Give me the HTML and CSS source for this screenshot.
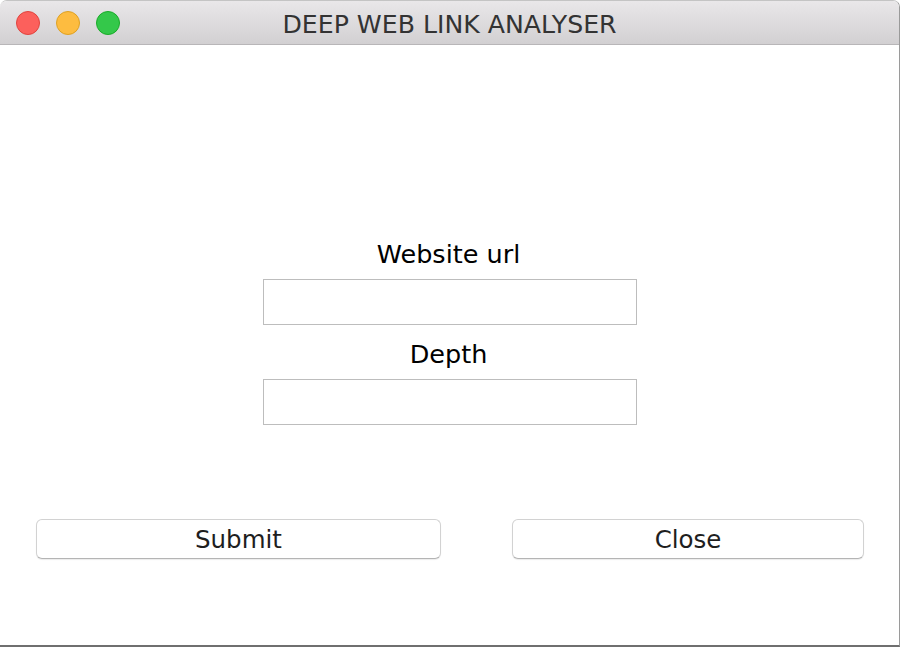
FILE: index.html
```html
<!DOCTYPE html>
<html lang="en">
<head>
<meta charset="utf-8">
<title>DEEP WEB LINK ANALYSER</title>
<link rel="stylesheet" href="styles.css">
</head>
<body>
<div class="window">
  <header class="titlebar">
    <div class="lights">
      <span class="light red"></span>
      <span class="light yellow"></span>
      <span class="light green"></span>
    </div>
    <div class="title">DEEP WEB LINK ANALYSER</div>
  </header>
  <main class="content">
    <form class="form">
      <label class="label" for="url">Website url</label>
      <input class="field" id="url" type="text">
      <label class="label label-second" for="depth">Depth</label>
      <input class="field" id="depth" type="text">
    </form>
    <div class="actions">
      <button class="btn btn-submit" type="button">Submit</button>
      <button class="btn btn-close" type="button">Close</button>
    </div>
  </main>
</div>
</body>
</html>
```
FILE: styles.css
```css
html, body {
  margin: 0;
  padding: 0;
  background: #ffffff;
}
body {
  width: 902px;
  height: 648px;
  overflow: hidden;
  font-family: "DejaVu Sans", "Noto Sans", sans-serif;
}
.window {
  box-sizing: border-box;
  width: 900px;
  height: 647px;
  background: #ffffff;
  border-top: 1px solid #c4c4c4;
  border-right: 1px solid #9a9a9a;
  border-bottom: 2px solid #6f6f6f;
  border-radius: 7px 7px 0 0;
  display: flex;
  flex-direction: column;
  overflow: hidden;
}
.titlebar {
  box-sizing: border-box;
  height: 44px;
  flex: none;
  display: flex;
  align-items: center;
  background: linear-gradient(#e9e7e9, #d2d0d2);
  border-bottom: 1px solid #b8b6b8;
  position: relative;
}
.lights {
  display: flex;
  gap: 16px;
  padding-left: 16px;
  position: relative;
  z-index: 1;
}
.light {
  box-sizing: border-box;
  width: 24px;
  height: 24px;
  border-radius: 50%;
  margin-top: 1px;
}
.red { background: #fc605c; border: 1px solid #e0443e; }
.yellow { background: #fdbc40; border: 1px solid #dea123; }
.green { background: #34c84a; border: 1px solid #1aab29; }
.title {
  position: absolute;
  left: 0;
  right: 0;
  top: 0;
  bottom: 0;
  display: flex;
  align-items: center;
  justify-content: center;
  font-size: 25.2px;
  color: #333333;
  padding-top: 4px;
  padding-left: 0;
}
.content {
  flex: 1;
  display: flex;
  flex-direction: column;
}
.form {
  display: flex;
  flex-direction: column;
  align-items: center;
  padding-top: 194px;
  margin: 0;
}
.label {
  font-size: 25.5px;
  line-height: 30px;
  color: #000000;
  margin-bottom: 10px;
  padding-right: 2px;
}
.label-second {
  margin-top: 14px;
}
.field {
  box-sizing: border-box;
  width: 374px;
  height: 46px;
  border: 1px solid #bdbdbd;
  border-radius: 0;
  background: #ffffff;
  margin: 0;
  padding: 0 6px;
  outline: none;
}
.actions {
  display: flex;
  justify-content: space-between;
  padding: 94px 35px 0 36px;
}
.btn {
  box-sizing: border-box;
  height: 40px;
  background: #ffffff;
  border: 1px solid #d2d2d2;
  border-bottom-color: #b4b4b4;
  border-radius: 6px;
  box-shadow: 0 1px 1px rgba(0, 0, 0, 0.08);
  font-family: "DejaVu Sans", "Noto Sans", sans-serif;
  font-size: 24.5px;
  color: #1e1e1e;
  padding: 0;
  margin: 0;
}
.btn-submit { width: 405px; }
.btn-close { width: 352px; }
```
